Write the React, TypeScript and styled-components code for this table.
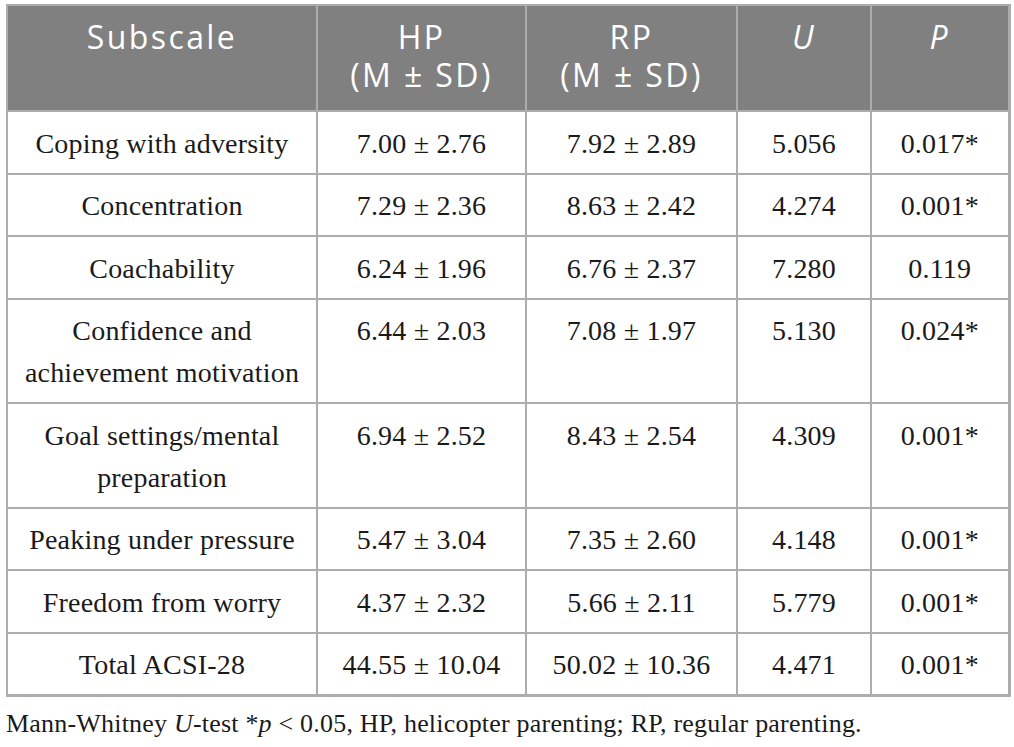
import styled, { createGlobalStyle } from 'styled-components';

const GlobalStyle = createGlobalStyle`
  body {
    margin: 0;
    background: #ffffff;
  }
`;

const Page = styled.div`
  padding: 4px 6px 0 6px;
  width: 1005px;
`;

const Table = styled.table`
  width: 1002px;
  border-collapse: collapse;
  table-layout: fixed;
  border: 2px solid #acacac;
  border-right-width: 3px;
  border-bottom-width: 3px;
`;

const Col = styled.col<{ $w: number }>`
  width: ${(p) => p.$w}px;
`;

const HeadCell = styled.th<{ $italic?: boolean }>`
  background: #808080;
  color: #ffffff;
  font-family: 'Open Sans', 'Noto Sans', sans-serif;
  font-weight: 400;
  font-size: 32px;
  letter-spacing: 2.4px;
  line-height: 38px;
  font-style: ${(p) => (p.$italic ? 'italic' : 'normal')};
  text-align: center;
  vertical-align: top;
  padding: 12px 6px 16px;
  border: 2px solid #acacac;
  height: 104px;
  box-sizing: border-box;
`;

const Cell = styled.td`
  font-family: 'Liberation Serif', 'Times New Roman', serif;
  font-size: 28px;
  letter-spacing: 0.2px;
  line-height: 42px;
  color: #1a1a1a;
  text-align: center;
  vertical-align: top;
  padding: 10.5px 6px 8px;
  border: 2px solid #acacac;
`;

const Note = styled.p`
  margin: 12px 0 0 0;
  font-family: 'Liberation Serif', 'Times New Roman', serif;
  font-size: 26px;
  letter-spacing: 0.2px;
  color: #1a1a1a;
`;

const rows = [
  ['Coping with adversity', '7.00 ± 2.76', '7.92 ± 2.89', '5.056', '0.017*'],
  ['Concentration', '7.29 ± 2.36', '8.63 ± 2.42', '4.274', '0.001*'],
  ['Coachability', '6.24 ± 1.96', '6.76 ± 2.37', '7.280', '0.119'],
  ['Confidence and\nachievement motivation', '6.44 ± 2.03', '7.08 ± 1.97', '5.130', '0.024*'],
  ['Goal settings/mental\npreparation', '6.94 ± 2.52', '8.43 ± 2.54', '4.309', '0.001*'],
  ['Peaking under pressure', '5.47 ± 3.04', '7.35 ± 2.60', '4.148', '0.001*'],
  ['Freedom from worry', '4.37 ± 2.32', '5.66 ± 2.11', '5.779', '0.001*'],
  ['Total ACSI-28', '44.55 ± 10.04', '50.02 ± 10.36', '4.471', '0.001*'],
];

function App() {
  return (
    <>
      <GlobalStyle />
      <Page>
        <Table>
          <colgroup>
            <Col $w={310} />
            <Col $w={209} />
            <Col $w={211} />
            <Col $w={134} />
            <Col $w={138} />
          </colgroup>
          <thead>
            <tr>
              <HeadCell>Subscale</HeadCell>
              <HeadCell>
                HP
                <br />
                (M ± SD)
              </HeadCell>
              <HeadCell>
                RP
                <br />
                (M ± SD)
              </HeadCell>
              <HeadCell $italic>U</HeadCell>
              <HeadCell $italic>P</HeadCell>
            </tr>
          </thead>
          <tbody>
            {rows.map((r) => (
              <tr key={r[0]}>
                {r.map((c, i) => (
                  <Cell key={i}>
                    {c.split('\n').map((line, j) => (
                      <span key={j}>
                        {j > 0 && <br />}
                        {line}
                      </span>
                    ))}
                  </Cell>
                ))}
              </tr>
            ))}
          </tbody>
        </Table>
        <Note>
          Mann-Whitney <i>U</i>-test *<i>p</i> &lt; 0.05, HP, helicopter parenting; RP, regular
          parenting.
        </Note>
      </Page>
    </>
  );
}

export default App;
